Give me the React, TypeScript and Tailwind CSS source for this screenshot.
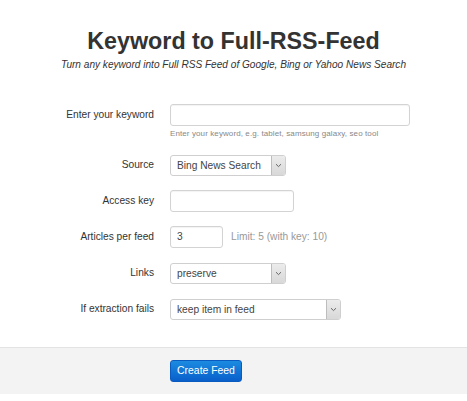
import React from "react"

const font = { fontFamily: '"Liberation Sans", Arial, sans-serif' }

const Row = ({ label, children }: { label: string; children: React.ReactNode }) => (
  <div className="flex items-center h-[22px]">
    <label className="w-[154px] text-right text-[10.2px] text-[#333]">{label}</label>
    <div className="ml-4 flex items-center">{children}</div>
  </div>
)

const Select = ({ value, width }: { value: string; width: string }) => (
  <div className={`flex h-[21px] border border-[#cfcfcf] rounded-[3px] bg-white overflow-hidden ${width}`}>
    <span className="flex-1 pl-[6px] text-[10.2px] leading-[19px] text-[#444] whitespace-nowrap">{value}</span>
    <span className="w-[14px] flex items-center justify-center border-l border-[#bdbdbd] bg-gradient-to-b from-[#ececec] to-[#d8d8d8]">
      <svg width="7" height="5" viewBox="0 0 7 5">
        <path d="M1 1.2 L3.5 3.6 L6 1.2" fill="none" stroke="#666" strokeWidth="1" />
      </svg>
    </span>
  </div>
)

const Input = ({ width, value }: { width: string; value?: string }) => (
  <div className={`h-[22px] border border-[#d3d3d3] rounded-[3px] bg-white pl-[6px] text-[10.2px] leading-[20px] text-[#444] shadow-[inset_0_1px_1px_rgba(0,0,0,0.05)] ${width}`}>
    {value}
  </div>
)

export default function App() {
  return (
    <div className="w-[467px] h-[401px] bg-white flex flex-col" style={font}>
      <div className="pt-[28px] text-center">
        <h1 className="text-[23.3px] font-bold text-[#333] leading-[26px]">Keyword to Full-RSS-Feed</h1>
        <p className="mt-[5px] text-[10.1px] italic text-[#333] leading-[12px]">
          Turn any keyword into Full RSS Feed of Google, Bing or Yahoo News Search
        </p>
      </div>

      <div className="mt-[33px] flex flex-col">
        <div>
          <Row label="Enter your keyword">
            <Input width="w-[240px]" />
          </Row>
          <p className="ml-[170px] mt-[3px] text-[8px] tracking-[0.1px] text-[#888] leading-[10px]">
            Enter your keyword, e.g. tablet, samsung galaxy, seo tool
          </p>
        </div>
        <div className="mt-[15px] flex flex-col gap-[14px]">
          <Row label="Source">
            <Select value="Bing News Search" width="w-[116px]" />
          </Row>
          <Row label="Access key">
            <Input width="w-[124px]" />
          </Row>
          <Row label="Articles per feed">
            <Input width="w-[53px]" value="3" />
            <span className="ml-[8px] text-[10.2px] text-[#999]">Limit: 5 (with key: 10)</span>
          </Row>
          <Row label="Links">
            <Select value="preserve" width="w-[116px]" />
          </Row>
          <Row label="If extraction fails">
            <Select value="keep item in feed" width="w-[171px]" />
          </Row>
        </div>
      </div>

      <div className="mt-[27px] h-[47px] border-t border-[#e3e3e3] bg-[#f3f3f3] flex items-center pl-[170px]">
        <button className="h-[22px] w-[72px] rounded-[3px] border border-[#0a5bbf] bg-gradient-to-b from-[#1c8be0] to-[#0a5fcb] text-white text-[10.4px]">
          Create Feed
        </button>
      </div>
    </div>
  )
}
